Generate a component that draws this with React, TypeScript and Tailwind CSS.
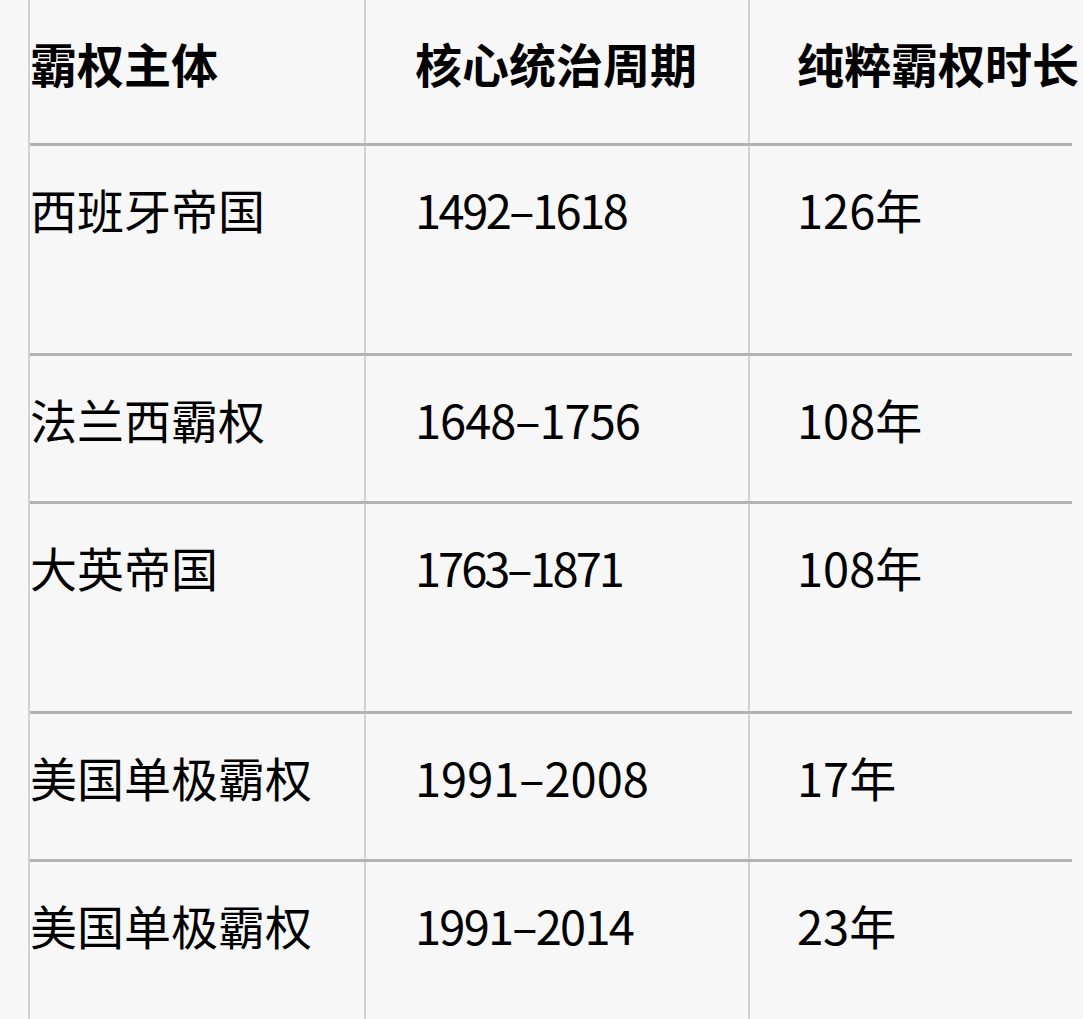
const font = { fontFamily: '"Noto Sans CJK SC", "Noto Sans", sans-serif' };

const header = ['霸权主体', '核心统治周期', '纯粹霸权时长'];

const rows = [
  { name: '西班牙帝国', period: '1492–1618', track: 'tracking-[-2.5px]', span: '126年', tall: true },
  { name: '法兰西霸权', period: '1648–1756', track: 'tracking-[-1px]', span: '108年', tall: false },
  { name: '大英帝国', period: '1763–1871', track: 'tracking-[-3px]', span: '108年', tall: true },
  { name: '美国单极霸权', period: '1991–2008', track: 'tracking-normal', span: '17年', tall: false },
  { name: '美国单极霸权', period: '1991–2014', track: 'tracking-[-1.75px]', span: '23年', tall: true },
];

function Row({
  cells,
  bold,
  height,
  track = 'tracking-normal',
}: {
  cells: string[];
  bold?: boolean;
  height: string;
  track?: string;
}) {
  const text = bold ? 'font-bold' : 'font-normal';
  return (
    <div className={`flex border-b-[3px] border-[#b3b3b3] ${height}`}>
      <div className={`w-[336px] shrink-0 border-r-2 border-[#d3d3d3] pt-[31px] pr-[47px] whitespace-nowrap ${text}`}>
        {cells[0]}
      </div>
      <div className={`w-[384px] shrink-0 border-r-2 border-[#d3d3d3] pt-[31px] pl-[49px] whitespace-nowrap ${track} ${text}`}>
        {cells[1]}
      </div>
      <div className={`w-[322px] shrink-0 pt-[31px] pl-[47px] whitespace-nowrap ${text}`}>
        {cells[2]}
      </div>
    </div>
  );
}

export default function App() {
  return (
    <div className="h-screen w-full overflow-hidden bg-[#f7f7f7] text-[#000] text-[47px] leading-[63px]" style={font}>
      <div className="ml-[28px] w-[1044px] border-l-2 border-[#d3d3d3]">
        <Row cells={header} bold height="h-[146px]" />
        {rows.map((r, i) => (
          <Row
            key={i}
            cells={[r.name, r.period, r.span]}
            track={r.track}
            height={r.tall ? 'h-[210px]' : 'h-[148px]'}
          />
        ))}
      </div>
    </div>
  );
}
